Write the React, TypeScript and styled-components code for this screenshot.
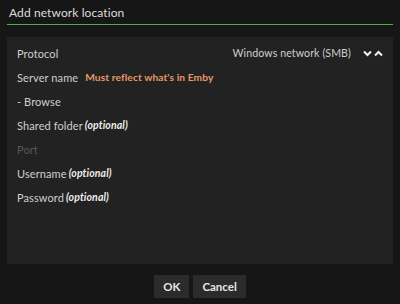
import React from 'react';
import styled, { createGlobalStyle } from 'styled-components';

const GlobalStyle = createGlobalStyle`
  html, body {
    margin: 0;
    padding: 0;
    background: #161616;
    font-family: Lato, 'Noto Sans', sans-serif;
  }
`;

const Dialog = styled.div`
  width: 400px;
  height: 304px;
  box-sizing: border-box;
  padding: 0 7px;
  display: flex;
  flex-direction: column;
`;

const Header = styled.div`
  height: 25px;
  box-sizing: border-box;
  border-bottom: 1px solid #4faf48;
  padding: 0 0 0 2px;
  display: flex;
  align-items: center;
`;

const Title = styled.h1`
  margin: 0;
  color: #dcdcdc;
  font-size: 12px;
  font-weight: 400;
  letter-spacing: 0.1px;
`;

const Panel = styled.div`
  margin-top: 12px;
  height: 227px;
  box-sizing: border-box;
  background: #222222;
  padding: 4px 10px 5px;
  display: flex;
  flex-direction: column;
`;

const Row = styled.div<{ $disabled?: boolean }>`
  height: 24px;
  display: flex;
  align-items: center;
  font-size: 11px;
  letter-spacing: 0.1px;
  color: ${p => (p.$disabled ? '#575757' : '#cfcfcf')};
`;

const Optional = styled.em`
  font-weight: 700;
  font-style: italic;
  font-size: 10.5px;
  margin-left: 2px;
  color: #ececec;
`;

const Hint = styled.span`
  margin-left: 7px;
  color: #e6996a;
  font-weight: 700;
  font-size: 10.2px;
`;

const Value = styled.span`
  margin-left: auto;
  color: #cfcfcf;
  font-size: 10.6px;
`;

const Arrows = styled.span`
  display: inline-flex;
  align-items: center;
  margin-left: 12px;
  gap: 2px;
`;

const Footer = styled.div`
  display: flex;
  justify-content: center;
  gap: 4px;
  margin-top: 11px;
`;

const Button = styled.button`
  height: 23px;
  padding: 0 9px;
  border: none;
  border-radius: 0;
  background: #2b2b2b;
  color: #e6e6e6;
  font-family: Lato, 'Noto Sans', sans-serif;
  font-size: 11.5px;
  font-weight: 700;
`;

const Chevron = ({ up }: { up?: boolean }) => (
  <svg width="9" height="7" viewBox="0 0 9 7">
    <path
      d={up ? 'M1 5.5 L4.5 2 L8 5.5' : 'M1 1.5 L4.5 5 L8 1.5'}
      fill="none"
      stroke="#f2f2f2"
      strokeWidth="2"
    />
  </svg>
);

export default function App() {
  return (
    <>
      <GlobalStyle />
      <Dialog>
        <Header>
          <Title>Add network location</Title>
        </Header>
        <Panel>
          <Row>
            Protocol
            <Value>Windows network (SMB)</Value>
            <Arrows>
              <Chevron />
              <Chevron up />
            </Arrows>
          </Row>
          <Row>
            Server name
            <Hint>Must reflect what's in Emby</Hint>
          </Row>
          <Row>- Browse</Row>
          <Row>
            Shared folder<Optional>(optional)</Optional>
          </Row>
          <Row $disabled>Port</Row>
          <Row>
            Username<Optional>(optional)</Optional>
          </Row>
          <Row>
            Password<Optional>(optional)</Optional>
          </Row>
        </Panel>
        <Footer>
          <Button>OK</Button>
          <Button>Cancel</Button>
        </Footer>
      </Dialog>
    </>
  );
}
